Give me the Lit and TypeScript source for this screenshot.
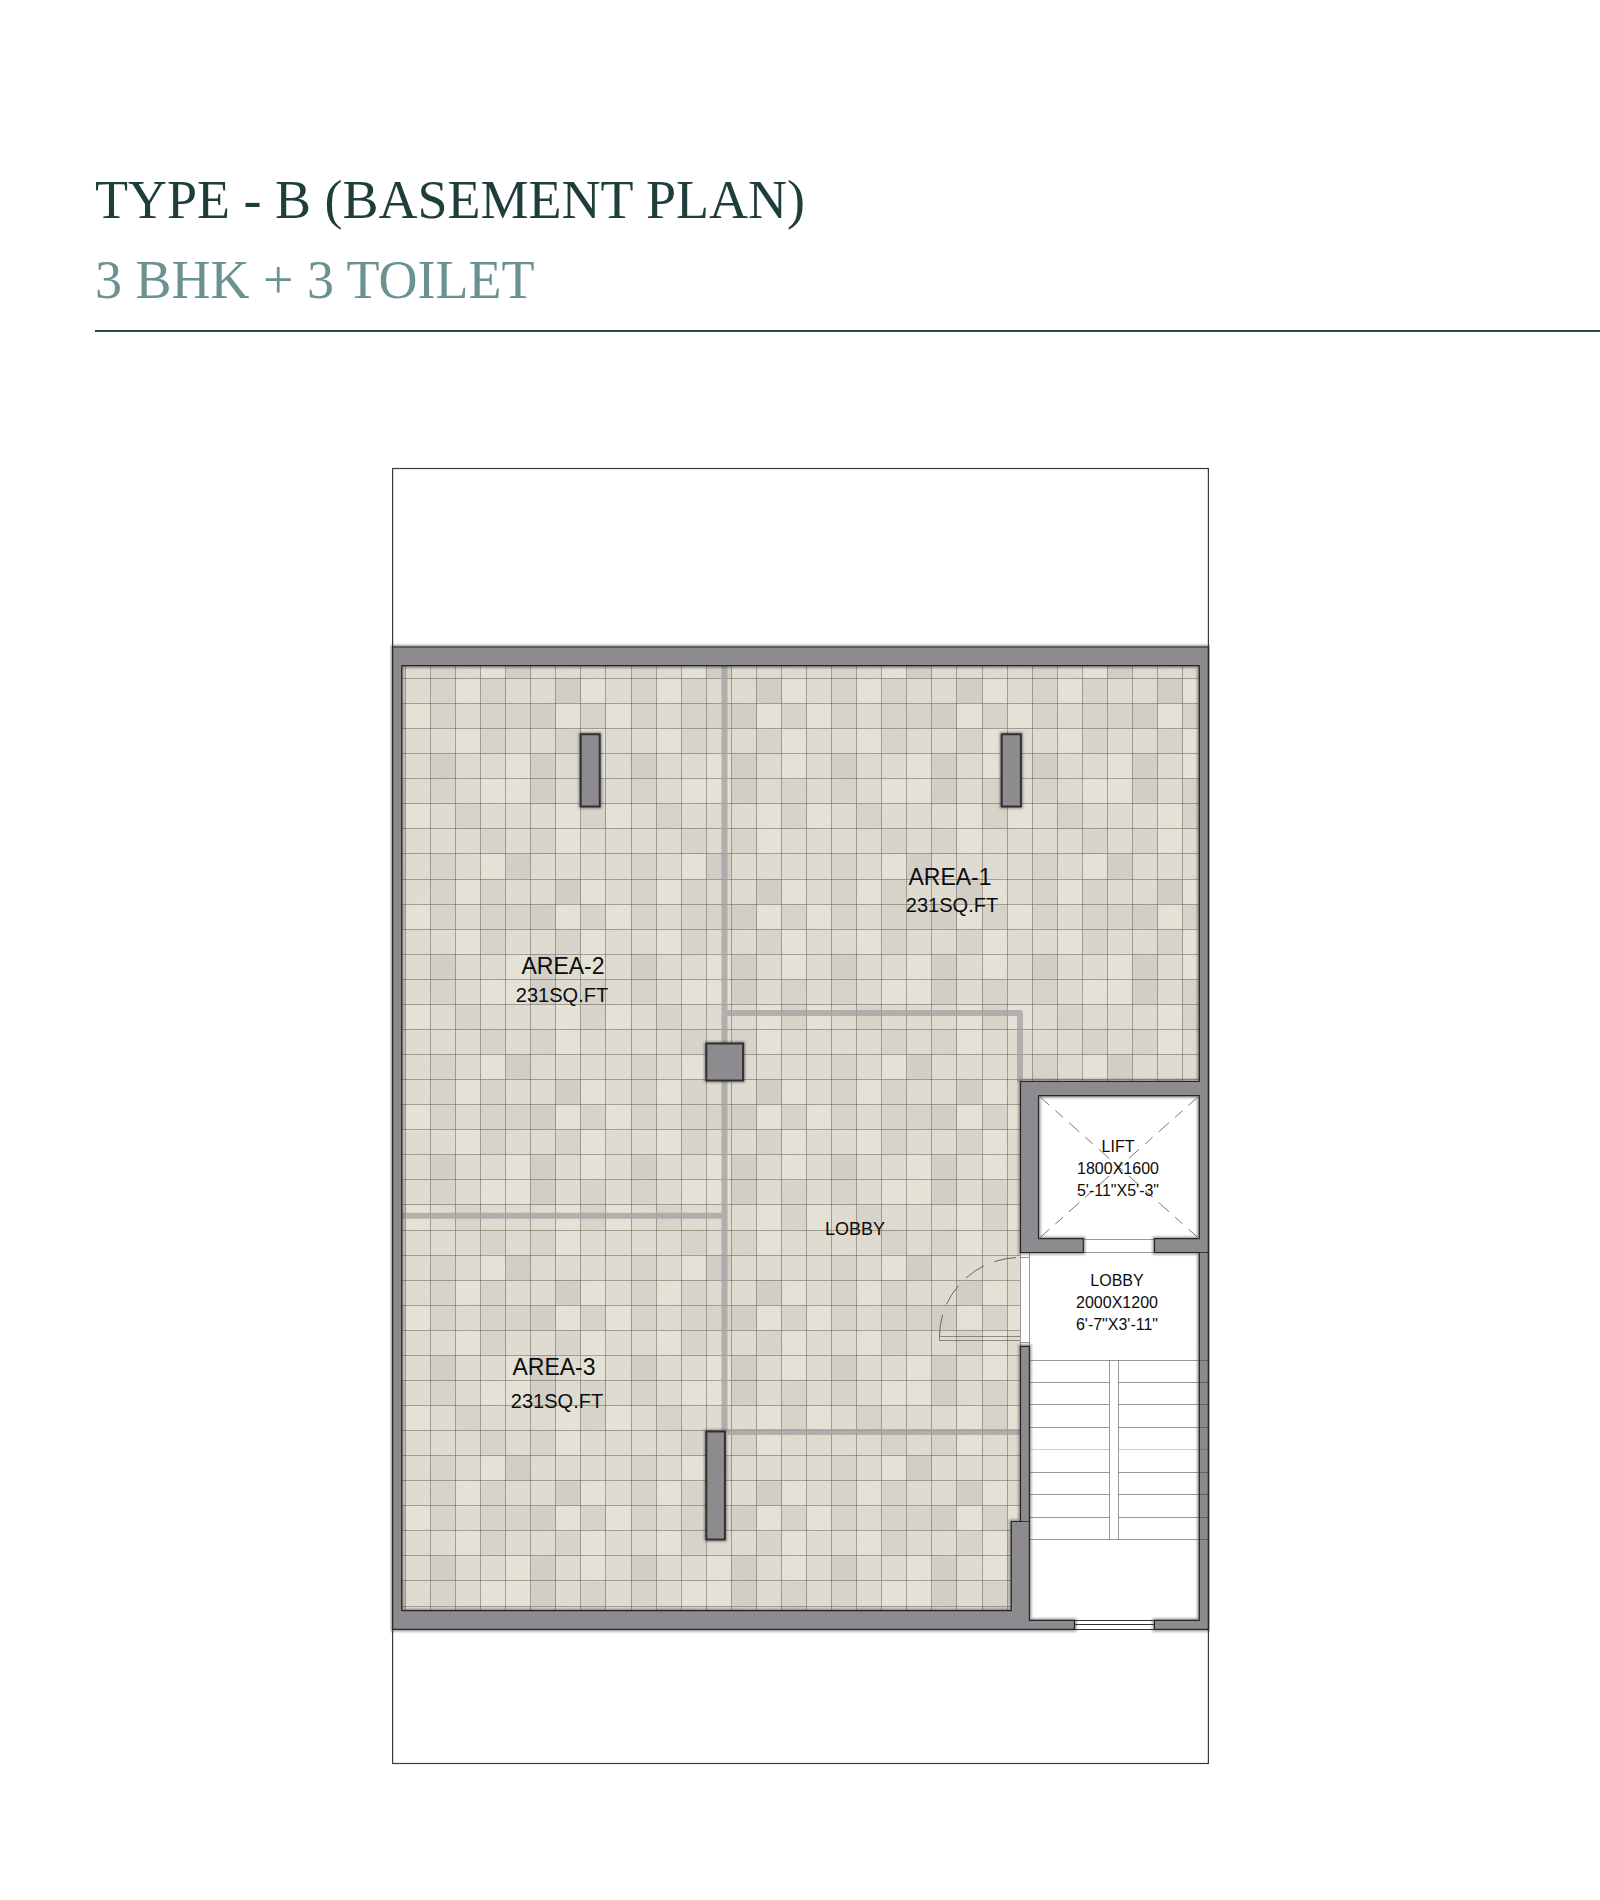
import { LitElement, html, css, svg } from "lit";
import { customElement } from "lit/decorators.js";

/* One repeat of the floor tiling, eight rows of eight tiles, 0 = lightest. */
const TILE_SHADES = [
  "12103111",
  "12021130",
  "02122302",
  "11021120",
  "13110310",
  "12100312",
  "01211102",
  "11121201",
];
const SHADE_COLOURS = ["#e7e4d8", "#e1ddd2", "#d9d5ca", "#d4cfc7"];
const TILE = 25.07;
const GRID_X = 405.4;
const GRID_Y = 653.4;

const gridPath = () => {
  let d = "";
  for (let i = 0; i < 32; i++) d += `M${Math.floor(GRID_X + i * TILE) + 0.5} 666V1611`;
  for (let i = 1; i < 39; i++) d += `M402 ${Math.floor(GRID_Y + i * TILE) + 0.5}H1199`;
  return d;
};

interface Label {
  x: number;
  y: number;
  kind: string;
  text: string;
}

const LABELS: Label[] = [
  { x: 950, y: 885, kind: "room", text: "AREA-1" },
  { x: 952, y: 912, kind: "size", text: "231SQ.FT" },
  { x: 563, y: 974, kind: "room", text: "AREA-2" },
  { x: 562, y: 1002, kind: "size", text: "231SQ.FT" },
  { x: 554, y: 1375, kind: "room", text: "AREA-3" },
  { x: 557, y: 1408, kind: "size", text: "231SQ.FT" },
  { x: 855, y: 1235, kind: "hall", text: "LOBBY" },
  { x: 1118, y: 1152, kind: "note", text: "LIFT" },
  { x: 1118, y: 1174, kind: "note", text: "1800X1600" },
  { x: 1118, y: 1196, kind: "note", text: "5'-11\"X5'-3\"" },
  { x: 1117, y: 1286, kind: "note", text: "LOBBY" },
  { x: 1117, y: 1308, kind: "note", text: "2000X1200" },
  { x: 1117, y: 1330, kind: "note", text: "6'-7\"X3'-11\"" },
];

const STAIR_TREADS = [1382.5, 1404.5, 1427.5, 1472.5, 1494.5, 1517.5];

@customElement("floor-plan")
export class FloorPlan extends LitElement {
  static styles = css`
    :host {
      display: block;
    }
    .plan {
      display: block;
      width: 100%;
      height: auto;
    }
    .plot {
      fill: none;
      stroke: #3a3a3a;
      stroke-width: 1.2;
    }
    .grid {
      fill: none;
      stroke: #5f5b50;
      stroke-opacity: 0.5;
    }
    .grain {
      opacity: 0.12;
    }
    .partition {
      fill: none;
      stroke: #a0a0a0;
      stroke-opacity: 0.75;
      stroke-width: 6;
      stroke-linejoin: round;
    }
    .white {
      fill: #fff;
    }
    .wall {
      fill: #8d8b90;
      stroke: #262628;
      stroke-width: 1.2;
      stroke-linejoin: round;
    }
    .pillar {
      fill: #8d8b90;
      stroke: #303032;
      stroke-width: 2;
      stroke-linejoin: round;
    }
    .edge {
      fill: none;
      stroke: #222;
      stroke-opacity: 0.45;
      stroke-width: 4;
    }
    .thin {
      fill: none;
      stroke: #333;
      stroke-opacity: 0.5;
    }
    .faint {
      fill: none;
      stroke: #333;
      stroke-opacity: 0.25;
    }
    .dark {
      fill: none;
      stroke: #333;
    }
    .swing {
      fill: none;
      stroke: #66665f;
      stroke-dasharray: 22 11;
    }
    .cross {
      fill: none;
      stroke: #777;
      stroke-dasharray: 14 8 10 8;
    }
    text {
      fill: #0c0c0c;
      text-anchor: middle;
      font-family: "Liberation Sans", Arial, sans-serif;
    }
    .room {
      font-size: 23px;
    }
    .hall {
      font-size: 18px;
    }
    .size {
      font-size: 20px;
    }
    .note {
      font-size: 16px;
    }
  `;

  private tiles() {
    return TILE_SHADES.flatMap((row, r) =>
      [...row].map(
        (shade, c) => svg`<rect x=${c * TILE} y=${r * TILE} width=${TILE + 0.3} height=${TILE + 0.3}
          fill=${SHADE_COLOURS[Number(shade)]}></rect>`,
      ),
    );
  }

  render() {
    const walls =
      "M392.7 647H1208.3V1252.5H1154.5V1238.7H1199.3V1095.7H1038.5V1238.7H1083.3V1252.5H1020.5V1081.5H1199.3V665.7H401.7V1610.7H1011.3V1521.5H1020.5V1346.3H1029.4V1620.4H1074.5V1629.4H392.7Z" +
      "M1199.3 1252.5H1208.3V1629.4H1154.5V1620.4H1199.3Z";
    const pillars =
      "M580.7 734.3h19v72.3h-19zM1001.7 734.3h19.2v72.3h-19.2zM706.3 1043.4h36.8v37h-36.8zM706.3 1431.6h18.6v107.8h-18.6z";
    return html`
      <svg class="plan" viewBox="390 460 820 1310" role="img" aria-label="Basement floor plan">
        <defs>
          <pattern id="tiling" patternUnits="userSpaceOnUse" x=${GRID_X} y=${GRID_Y}
            width=${TILE * 8} height=${TILE * 8}>${this.tiles()}</pattern>
          <clipPath id="floor">
            <path d="M402 666H1199V1081H1020V1521H1011V1610H402Z" />
          </clipPath>
          <filter id="noise" x="0" y="0" width="100%" height="100%">
            <feTurbulence type="fractalNoise" baseFrequency="0.45" numOctaves="3" seed="4" />
            <feColorMatrix type="saturate" values="0" />
          </filter>
          <filter id="soft" x="-5%" y="-5%" width="110%" height="110%">
            <feGaussianBlur stdDeviation="1.2" />
          </filter>
        </defs>

        <rect class="plot" x="392.6" y="468.5" width="815.8" height="1295" />

        <g clip-path="url(#floor)">
          <rect x="402" y="666" width="798" height="945" fill="url(#tiling)" />
          <rect class="grain" x="402" y="666" width="798" height="945" filter="url(#noise)" />
          <path class="grid" d=${gridPath()} />
          <path class="partition"
            d="M724.5 666V1432M727.5 1013H1020V1082M402 1215.8H721.5M727.5 1432H1020" />
          <path class="thin" d="M939.5 1341V1336.5H1020M939.5 1340.5H1020" />
        </g>

        <path class="white" d="M1038.5 1095.7H1199.3V1238.7H1154.5V1252.5H1199.3V1620.4H1154.5V1629.4H1074.5V1620.4H1029.4V1346.3H1020.5V1252.5H1083.3V1238.7H1038.5Z" />
        <path class="edge" filter="url(#soft)" d=${walls + pillars} />
        <path class="wall" d=${walls} />
        <path class="pillar" d=${pillars} />
        <path class="dark" d="M1020.5 1521.5H1029.5M1199.5 1252.5H1208" />

        <path class="cross" d="M1039 1096L1119 1167.2M1199 1096L1119 1167.2M1039 1238.5L1119 1167.2M1199 1238.5L1119 1167.2" />
        <path class="thin" d="M1083.5 1239.5H1154.5M1083.5 1252.5H1154.5" />
        <path class="thin" d="M1020.5 1252.5V1346M1029.5 1252.5V1346M1020.5 1342.5H1029.5M1020 1257.5H1029" />
        <path class="swing" d="M939.5 1336.5A80.5 79 0 0 1 1020 1257.5" />

        ${STAIR_TREADS.map((y) => svg`<path class="thin" d=${`M1029.5 ${y}H1109.5M1118.5 ${y}H1208`}></path>`)}
        <path class="faint" d="M1029.5 1449.5H1109.5M1118.5 1449.5H1208" />
        <path class="thin" d="M1029.5 1360.5H1208M1029.5 1539.5H1208M1109.5 1360.5V1539.5M1118.5 1360.5V1539.5" />
        <path class="dark" d="M1074.5 1620.5H1154.5M1074.5 1624.5H1154.5M1074.5 1629.5H1154.5" />

        ${LABELS.map((l) => svg`<text class=${l.kind} x=${l.x} y=${l.y}>${l.text}</text>`)}
      </svg>
    `;
  }
}

@customElement("app-root")
export class AppRoot extends LitElement {
  static styles = css`
    :host {
      display: block;
      background: #fff;
    }
    .heading {
      margin-left: 95px;
      padding: 160px 0 10px;
      border-bottom: 2px solid #2b4a48;
    }
    .title,
    .subtitle {
      margin: 0;
      font-family: "Liberation Serif", "Times New Roman", serif;
      font-size: 54px;
      font-weight: 400;
      line-height: 80px;
    }
    .title {
      color: #1f3d3b;
    }
    .subtitle {
      color: #6b9190;
    }
    .sheet {
      display: flex;
      justify-content: center;
      padding: 128px 24px;
    }
    .drawing {
      flex: 0 1 820px;
      min-width: 0;
    }
  `;

  render() {
    return html`
      <header class="heading">
        <h1 class="title">TYPE - B (BASEMENT PLAN)</h1>
        <p class="subtitle">3 BHK + 3 TOILET</p>
      </header>
      <main class="sheet">
        <floor-plan class="drawing"></floor-plan>
      </main>
    `;
  }
}
